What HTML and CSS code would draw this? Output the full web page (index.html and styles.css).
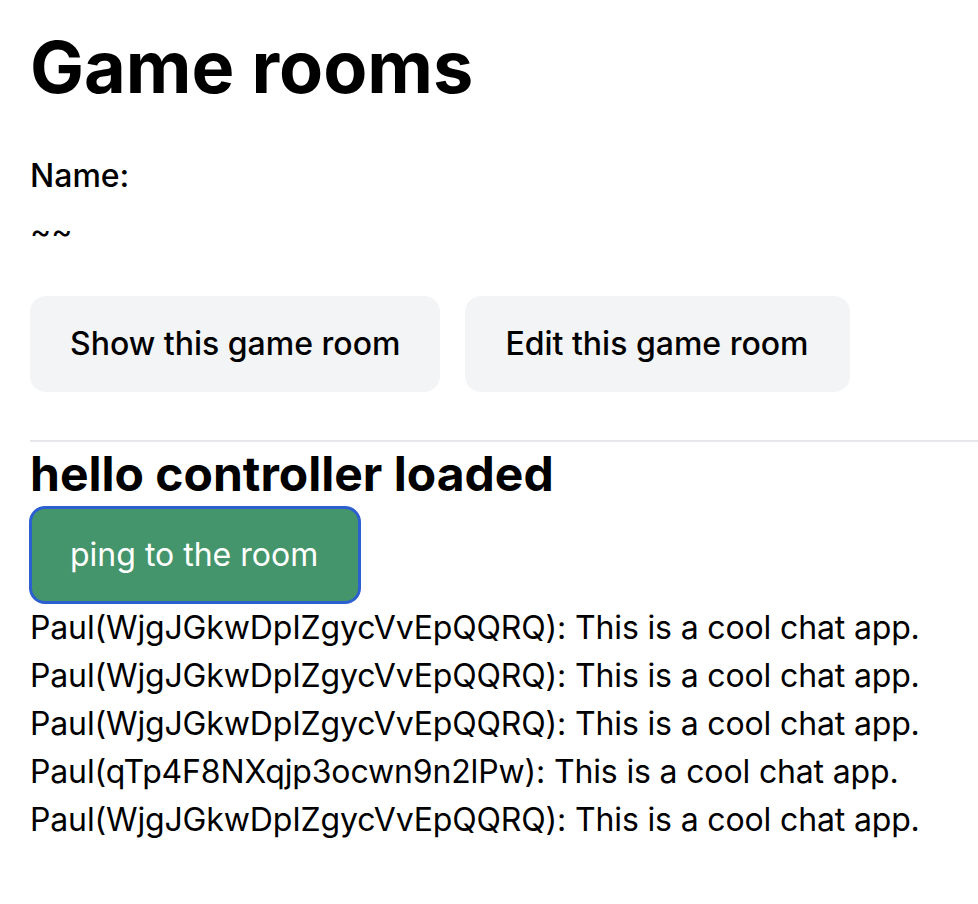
FILE: index.html
```html
<!DOCTYPE html>
<html lang="en">
<head>
  <meta charset="UTF-8" />
  <meta name="viewport" content="width=device-width, initial-scale=1.0"/>
  <title>Game rooms</title>
  <link rel="stylesheet" href="styles.css">
</head>
<body>
  <main class="page">
    <h1 class="title">Game rooms</h1>

    <div class="room">
      <p class="field">
        <strong class="label">Name:</strong>
        ~~
      </p>
    </div>

    <div class="actions">
      <a href="#" class="btn">Show this game room</a>
      <a href="#" class="btn btn-edit">Edit this game room</a>
    </div>

    <hr class="divider">

    <div class="hello">
      <h2 class="hello-title">hello controller loaded</h2>
      <button class="ping">ping to the room</button>
      <div class="messages">
        <p>Paul(WjgJGkwDpIZgycVvEpQQRQ): This is a cool chat app.</p>
        <p>Paul(WjgJGkwDpIZgycVvEpQQRQ): This is a cool chat app.</p>
        <p>Paul(WjgJGkwDpIZgycVvEpQQRQ): This is a cool chat app.</p>
        <p>Paul(qTp4F8NXqjp3ocwn9n2lPw): This is a cool chat app.</p>
        <p>Paul(WjgJGkwDpIZgycVvEpQQRQ): This is a cool chat app.</p>
      </div>
    </div>
  </main>
</body>
</html>
```

FILE: styles.css
```css
body {
  font-family: 'Inter', 'Liberation Sans', sans-serif;
  margin: 0;
  padding: 0;
  background-color: #fff;
  color: #000;
  font-size: 32px;
  line-height: 48px;
}

.page {
  padding: 27px 0 0 30px;
}

.title {
  font-size: 72px;
  line-height: 80px;
  font-weight: 700;
  margin: 0;
}

.field {
  margin: 45px 0 40px;
}

.label {
  display: block;
  font-weight: 500;
  margin-bottom: 8px;
}

.actions {
  margin-bottom: 48px;
}

.btn {
  display: inline-block;
  background-color: #f3f4f6;
  color: #000;
  text-decoration: none;
  font-weight: 500;
  padding: 24px 40px;
  border-radius: 16px;
}

.btn-edit {
  margin-left: 16px;
  padding-right: 41px;
}

.divider {
  border: none;
  border-top: 2px solid #e5e7eb;
  margin: 0;
}

.hello-title {
  font-size: 48px;
  line-height: 64px;
  font-weight: 700;
  margin: 0;
}

.ping {
  font-family: inherit;
  font-size: 32px;
  line-height: 48px;
  color: #fff;
  background-color: #45956c;
  border: 3px solid #2c5fcf;
  border-radius: 16px;
  padding: 22px 40px 22px 38px;
  margin-left: -1px;
  cursor: pointer;
}

.messages p {
  margin: 0;
  letter-spacing: -0.15px;
}
```
